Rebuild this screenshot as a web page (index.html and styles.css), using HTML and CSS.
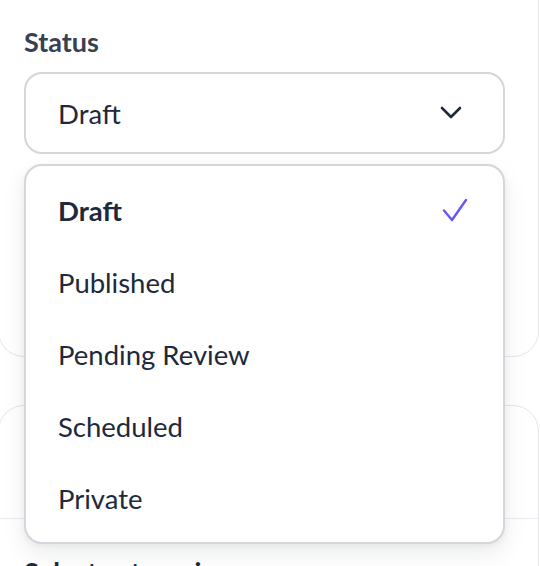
FILE: index.html
```html
<!DOCTYPE html>
<html lang="en">
<head>
    <meta charset="UTF-8">
    <meta name="viewport" content="width=device-width, initial-scale=1.0">
    <title>Post Settings</title>
    <link rel="stylesheet" href="styles.css">
</head>
<body>
    <div class="panel">
        <div class="card card-status">
            <div class="field">
                <label class="field-label">Status</label>
                <div class="select">
                    <span class="select-value">Draft</span>
                    <svg class="chevron" width="22" height="14" viewBox="0 0 22 14" fill="none">
                        <path d="M2 2l9 9 9-9" stroke="#1e293b" stroke-width="2.6" stroke-linecap="round" stroke-linejoin="round"/>
                    </svg>
                </div>
                <ul class="dropdown">
                    <li class="option selected">
                        <span>Draft</span>
                        <svg class="check" width="26" height="24" viewBox="0 0 26 24" fill="none">
                            <path d="M2 12.5l8 9.5L24 2" stroke="#6457f9" stroke-width="2.4" stroke-linecap="round" stroke-linejoin="round"/>
                        </svg>
                    </li>
                    <li class="option">Published</li>
                    <li class="option">Pending Review</li>
                    <li class="option">Scheduled</li>
                    <li class="option">Private</li>
                </ul>
            </div>
        </div>

        <div class="card card-categories">
            <div class="card-header"></div>
            <div class="card-body">
                <span class="placeholder">Select categories</span>
            </div>
        </div>
    </div>
</body>
</html>
```

FILE: styles.css
```css
body {
    margin: 0;
    background: #ffffff;
    font-family: "Lato", "Inter", sans-serif;
    color: #1e293b;
    overflow: hidden;
    height: 566px;
}
.panel {
    width: 541px;
    margin-left: -2px;
}
.card {
    background: #ffffff;
    border: 1.5px solid #e4e6eb;
    border-radius: 26px;
}
.card-status {
    margin-top: -60px;
    padding: 85px 33px 0 25px;
    height: 330px;
    border-top-left-radius: 0;
    border-top-right-radius: 0;
}
.field {
    position: relative;
}
.field-label {
    display: block;
    font-size: 27px;
    font-weight: 700;
    color: #374151;
    line-height: 32px;
    margin-bottom: 14px;
}
.select {
    display: flex;
    align-items: center;
    justify-content: space-between;
    height: 78px;
    padding: 0 41px 0 32px;
    border: 2px solid #d4d6dc;
    border-radius: 18px;
    font-size: 27.5px;
}
.dropdown {
    position: absolute;
    top: 138px;
    left: 0;
    right: 0;
    z-index: 2;
    margin: 0;
    padding: 8px 0;
    list-style: none;
    background: #ffffff;
    border: 2px solid #d4d6dc;
    border-radius: 18px;
    box-shadow: 0 10px 24px rgba(17, 24, 39, 0.08), 0 2px 6px rgba(17, 24, 39, 0.05);
}
.option {
    display: flex;
    align-items: center;
    justify-content: space-between;
    height: 72px;
    padding: 0 35px 0 32px;
    font-size: 27.5px;
}
.option.selected {
    font-weight: 700;
}
.card-categories {
    margin-top: 48px;
    height: 400px;
}
.card-header {
    height: 112px;
    border-bottom: 1.5px solid #e9ebef;
}
.card-body {
    padding: 36px 25px;
}
.placeholder {
    font-size: 27px;
    font-weight: 700;
    color: #1e293b;
}
```
